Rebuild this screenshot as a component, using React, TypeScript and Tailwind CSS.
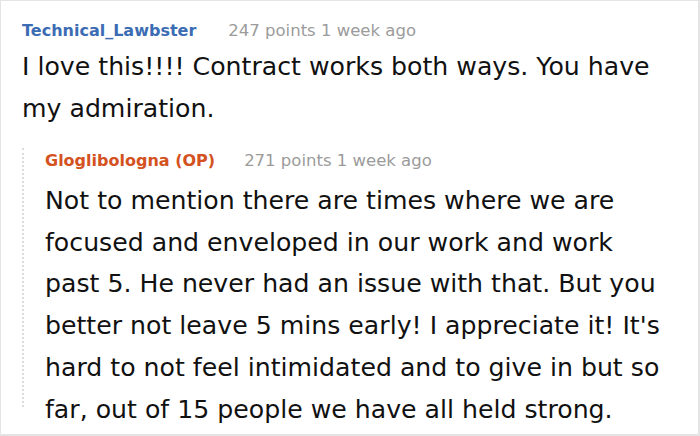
import React from "react";

const reply = [
  "Not to mention there are times where we are",
  "focused and enveloped in our work and work",
  "past 5. He never had an issue with that. But you",
  "better not leave 5 mins early! I appreciate it! It's",
  "hard to not feel intimidated and to give in but so",
  "far, out of 15 people we have all held strong.",
];

export default function App() {
  return (
    <div
      className="w-[700px] h-[436px] bg-white border-t border-l border-r-2 border-b-2 border-[#e4e4e4] overflow-hidden"
      style={{ fontFamily: '"DejaVu Sans", "Noto Sans", sans-serif' }}
    >
      <div className="pl-[21px] pt-[17px]">
        <div className="flex items-baseline h-[26px] leading-[26px]">
          <span className="text-[16px] font-bold text-[#3b6cb4]">Technical_Lawbster</span>
          <span className="ml-[32px] text-[16.5px] text-[#9b9b9b]">247 points 1 week ago</span>
        </div>
        <p className="text-[25.2px] leading-[42px] text-[#111] mt-[2px]">
          <span className="block whitespace-nowrap">I love this!!!! Contract works both ways. You have</span>
          <span className="block whitespace-nowrap">my admiration.</span>
        </p>
        <div className="mt-[29px] border-l-2 border-dotted border-[#dcdcdc] pl-[21px] h-[259px]">
          <div className="flex items-baseline h-[26px] leading-[26px] -mt-[11px]">
            <span className="text-[16px] font-bold text-[#d4521f]">Gloglibologna (OP)</span>
            <span className="ml-[29px] text-[16.5px] text-[#9b9b9b]">271 points 1 week ago</span>
          </div>
          <p className="text-[25.2px] leading-[41.7px] text-[#111] mt-[6px]">
            {reply.map((l) => (
              <span key={l} className="block whitespace-nowrap">{l}</span>
            ))}
          </p>
        </div>
      </div>
    </div>
  );
}
